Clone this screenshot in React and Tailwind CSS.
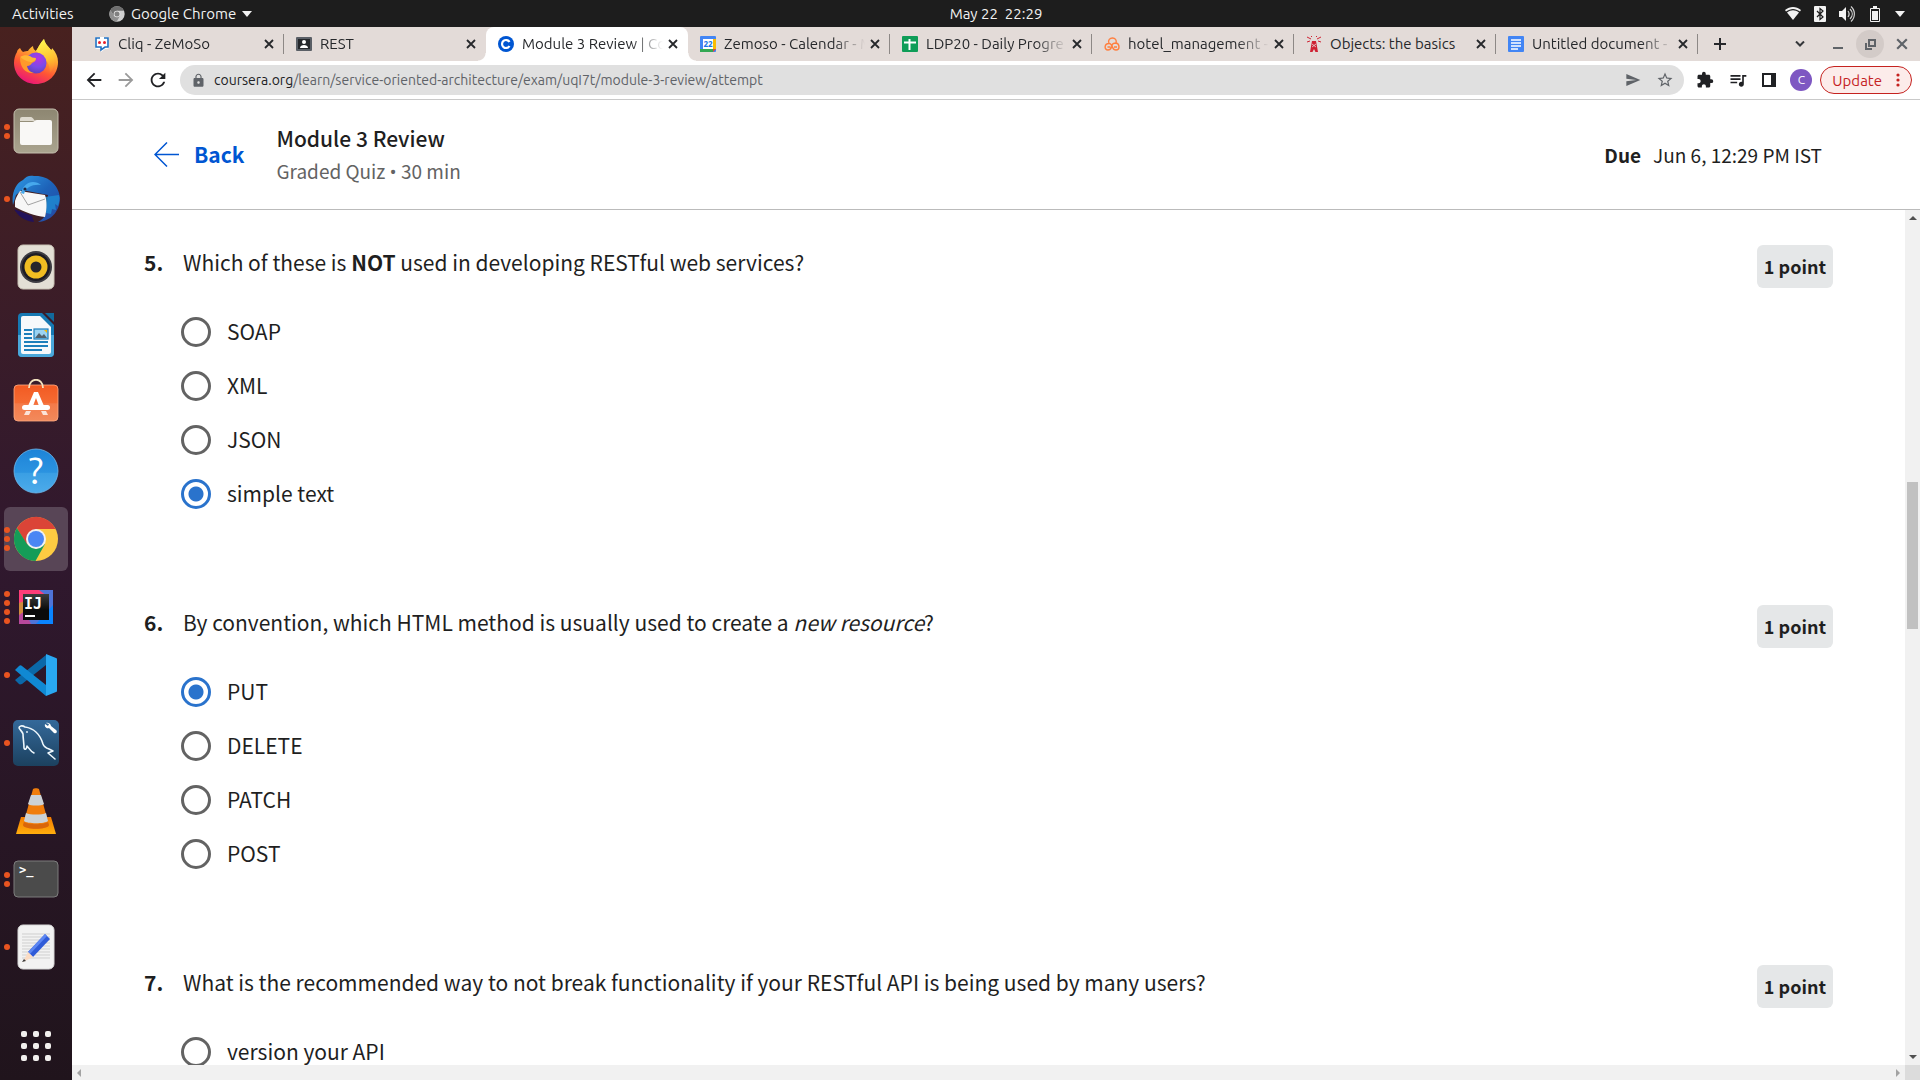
import React from "react";
import {
  MdArrowBack,
  MdArrowForward,
  MdRefresh,
  MdLock,
  MdSend,
  MdStarBorder,
  MdExtension,
  MdQueueMusic,
} from "react-icons/md";

/* ---------- Dock icons, each drawn on a 48 x 48 canvas ---------- */

function FirefoxIcon() {
  return (
    <svg viewBox="0 1 48 48" className="size-12">
      <defs>
        <linearGradient id="ffBody" x1="0.75" y1="0" x2="0.3" y2="1">
          <stop offset="0" stopColor="#fff44f" />
          <stop offset="0.35" stopColor="#ffa930" />
          <stop offset="0.65" stopColor="#ff5634" />
          <stop offset="1" stopColor="#e8127c" />
        </linearGradient>
        <radialGradient id="ffGlobe" cx="0.6" cy="0.3" r="0.8">
          <stop offset="0" stopColor="#b833e1" />
          <stop offset="0.5" stopColor="#7a4be8" />
          <stop offset="1" stopColor="#5b3fb0" />
        </radialGradient>
        <linearGradient id="ffFlame" x1="0.6" y1="0" x2="0.8" y2="1">
          <stop offset="0" stopColor="#fff44f" />
          <stop offset="0.6" stopColor="#ffc02f" />
          <stop offset="1" stopColor="#ff8a2a" stopOpacity="0.3" />
        </linearGradient>
      </defs>
      <path d="M8 10c1 2 2 3 3 4 2-1 4-1 5-1 1-2 3-4 5-5 0 2 1 4 3 5 2-3 4-8 8-12 1 5 4 7 7 11 1-1 1-1 1-2 4 4 6 9 6 14 0 13-10 22-22 22S2 37 2 25c0-4 1-8 3-11 0-1 1-3 3-4z" fill="url(#ffBody)" />
      <path d="M24 13c2-3 4-8 8-12 1 5 4 7 7 11 5 7 5 17-1 23 0-8-3-15-14-22z" fill="url(#ffFlame)" />
      <circle cx="24" cy="25" r="10.5" fill="url(#ffGlobe)" />
      <path d="M8 20c3-2 7-2 10-1 1 1 3 2 6 2 0 2-2 3-4 4-1 1-2 3-5 3 1 4 3 6 7 7-8 1-14-5-14-15z" fill="#ff9a2b" />
      <path d="M8 19c3-2 7-2 10-1 1 1 3 2 6 2 0 2-2 3-4 4-3 0-7-1-12-5z" fill="#ffb636" />
    </svg>
  );
}

function FilesIcon() {
  return (
    <svg viewBox="0 0 48 48" className="size-12">
      <defs>
        <linearGradient id="filesBg" x1="0" y1="0" x2="0" y2="1">
          <stop offset="0" stopColor="#8d8671" />
          <stop offset="1" stopColor="#aaa48f" />
        </linearGradient>
      </defs>
      <rect x="2" y="2" width="44" height="44" rx="5" fill="url(#filesBg)" stroke="#c4bfae" strokeWidth="1" />
      <path d="M8 14v-2a2 2 0 0 1 2-2h9c2 0 3 4 5 4z" fill="#dfdbd0" />
      <path d="M8 15h12c2 0 3-2 5-2h13a2 2 0 0 1 2 2v21a2 2 0 0 1-2 2H10a2 2 0 0 1-2-2z" fill="#f9f8f6" />
    </svg>
  );
}

function ThunderbirdIcon() {
  return (
    <svg viewBox="0 0 48 48" className="size-12">
      <defs>
        <linearGradient id="tbBody" x1="0" y1="0" x2="1" y2="1">
          <stop offset="0" stopColor="#2f9be6" />
          <stop offset="0.5" stopColor="#1d62b8" />
          <stop offset="1" stopColor="#2746a0" />
        </linearGradient>
      </defs>
      <path d="M2 34c4 7 10 12 20 13l-2-6z" fill="#22115a" />
      <path d="M1 30C-1 18 4 8 11 5c3-4 7-5 11-4 14-1 25 9 26 22 0 12-8 23-22 24 4-2 7-5 8-9l2-18-26-5-6 5z" fill="url(#tbBody)" />
      <path d="M33 22l14-2c1 4 0 8-1 11l-3-2 1 6-4-1-1 5-5-1z" fill="#1f8fd6" opacity="0.75" />
      <path d="M3 26c1-4 3-7 5-10l12 2 13 2c2 6 2 14 0 22-10-1-21-5-30-10z" fill="#f7f7f7" />
      <path d="M8 17l8 13 17-6" fill="none" stroke="#8d8d8d" strokeWidth="0.8" />
      <path d="M9 18c2-7 6-11 12-11 3 0 6 1 8 3-8-1-15 2-17 9z" fill="#47a9ec" />
      <circle cx="13" cy="14" r="1.6" fill="#1b2344" />
    </svg>
  );
}

function RhythmboxIcon() {
  return (
    <svg viewBox="0 0 48 48" className="size-12">
      <rect x="6" y="2" width="36" height="44" rx="5" fill="#e3dfd5" stroke="#c9c3b5" />
      <circle cx="24" cy="24" r="16" fill="#3d3c42" />
      <circle cx="24" cy="24" r="14" fill="#1d1c24" />
      <circle cx="24" cy="24" r="11.5" fill="#f0bd22" />
      <circle cx="24" cy="24" r="5.5" fill="#26252b" />
    </svg>
  );
}

function WriterIcon() {
  return (
    <svg viewBox="0 0 48 48" className="size-12">
      <path d="M10 2h20l12 12v28a4 4 0 0 1-4 4H10a4 4 0 0 1-4-4V6a4 4 0 0 1 4-4z" fill="#1679b3" />
      <path d="M6 24h36v18a4 4 0 0 1-4 4H10a4 4 0 0 1-4-4z" fill="#4aa8da" />
      <path d="M11 5h17l11 11v25a2 2 0 0 1-2 2H11a2 2 0 0 1-2-2V7a2 2 0 0 1 2-2z" fill="#f6f9fb" />
      <path d="M33 2h9v9z" fill="#12699c" />
      <path d="M12 19h8M12 23h8M12 27h8M12 31h24M12 35h24M12 39h18" stroke="#1c7fbb" strokeWidth="1.8" />
      <rect x="22" y="18" width="14" height="10" fill="#9bd3f2" stroke="#1c7fbb" strokeWidth="1.2" />
      <path d="M23 27l4-5 3 3 2-2 3 4z" fill="#51626d" />
      <path d="M32 19h3v3z" fill="#f2b705" />
    </svg>
  );
}

function SoftwareIcon() {
  return (
    <svg viewBox="0 3 48 48" className="size-12">
      <defs>
        <linearGradient id="swBg" x1="0" y1="0" x2="0" y2="1">
          <stop offset="0" stopColor="#f25a22" />
          <stop offset="0.5" stopColor="#f56b33" />
          <stop offset="0.52" stopColor="#f47a49" />
          <stop offset="1" stopColor="#f28a5c" />
        </linearGradient>
      </defs>
      <rect x="2" y="9" width="44" height="36" rx="4" fill="url(#swBg)" stroke="#ffab84" strokeWidth="0.8" />
      <path d="M17 12c0-11 14-11 14 0" fill="none" stroke="#f3e3bf" strokeWidth="1.8" />
      <path d="M22 16h4l6 14h-5l-3-8-3 8h-5z" fill="#ffffff" />
      <rect x="10" y="29" width="28" height="5" rx="2.5" fill="#ffffff" />
      <path d="M14 35h5l-2 4h-5zM29 35h5l2 4h-5z" fill="#fbe3d8" />
    </svg>
  );
}

function HelpIcon() {
  return (
    <svg viewBox="0 0 48 48" className="size-12">
      <defs>
        <linearGradient id="helpBg" x1="0" y1="0" x2="0" y2="1">
          <stop offset="0" stopColor="#1d83d8" />
          <stop offset="0.53" stopColor="#2b93e0" />
          <stop offset="0.55" stopColor="#3a9fe4" />
          <stop offset="1" stopColor="#4dabea" />
        </linearGradient>
      </defs>
      <circle cx="24" cy="24" r="22" fill="url(#helpBg)" stroke="#6db9ee" strokeWidth="0.8" />
      <text x="24" y="37" textAnchor="middle" fill="#fff" className="font-[Ubuntu,'Open_Sans',sans-serif] text-[38px]">?</text>
    </svg>
  );
}

function ChromeIcon() {
  return (
    <svg viewBox="0 0 48 48" className="size-12">
      <circle cx="24" cy="24" r="22" fill="#fdcb42" />
      <path d="M24 14h19.700A22 22 0 0 0 4.900 13L15 30z" fill="#db4437" />
      <path d="M4.900 13A22 22 0 0 0 23.500 46L33 29 24 34 15 29z" fill="#159c58" />
      <circle cx="24" cy="24" r="10" fill="#f1f1f1" />
      <circle cx="24" cy="24" r="8" fill="#4a86f4" />
    </svg>
  );
}

function ChromeGrayIcon() {
  return (
    <svg viewBox="0 0 48 48" className="size-4">
      <circle cx="24" cy="24" r="23" fill="#cfcfcf" />
      <path d="M24 14h21A23 23 0 0 0 4 13l11 17z" fill="#6f6f6f" />
      <path d="M4 13a23 23 0 0 0 19 34l10-18-9 5-9-5z" fill="#8f8f8f" />
      <circle cx="24" cy="24" r="10" fill="#e6e6e6" />
      <circle cx="24" cy="24" r="7.500" fill="#808080" />
    </svg>
  );
}

function IdeaIcon() {
  return (
    <svg viewBox="0 0 48 48" className="size-12">
      <defs>
        <linearGradient id="ijDark" x1="0" y1="0" x2="0" y2="1">
          <stop offset="0" stopColor="#3c3c3c" />
          <stop offset="0.6" stopColor="#0b0b0b" />
        </linearGradient>
      </defs>
      <rect x="7" y="7" width="34" height="34" fill="#4f74d8" />
      <path d="M7 7h20l8 6L7 30z" fill="#fe3d78" />
      <path d="M7 20l6-2v14l-6 4z" fill="#d18b3c" />
      <path d="M7 32l6-4 6 13H7z" fill="#b7489b" />
      <path d="M41 22v19H24z" fill="#0a84ff" />
      <rect x="11" y="11" width="26" height="26" fill="url(#ijDark)" />
      <text x="12" y="26" fill="#fff" className="font-['DejaVu_Sans_Mono',monospace] text-[15px] font-bold">IJ</text>
      <rect x="13" y="32" width="10" height="2" fill="#fff" />
    </svg>
  );
}

function CodeIcon() {
  return (
    <svg viewBox="0 0 48 48" className="size-12">
      <path d="M3 29l4 4c1 1 2 0 3 0l24-19V4L3 29z" fill="#0b68a8" />
      <path d="M3 19l4-4c1-1 2-1 3 0l24 19v11L3 19z" fill="#1089d3" />
      <path d="M34 3l10 4c1 0 1 1 1 2v30c0 1 0 2-1 2l-10 4z" fill="#29a8f1" />
    </svg>
  );
}

function MysqlIcon() {
  return (
    <svg viewBox="0 0 48 48" className="size-12">
      <defs>
        <linearGradient id="sqlBg" x1="0" y1="0" x2="0" y2="1">
          <stop offset="0" stopColor="#34699a" />
          <stop offset="1" stopColor="#1c415f" />
        </linearGradient>
      </defs>
      <rect x="1" y="1" width="46" height="46" rx="5" fill="url(#sqlBg)" />
      <path d="M7 9c0-2 3-3 6-1 8 1 15 7 18 17 1 3 3 4 6 5l4 2-5 2 7 6M7 9c1 2 3 3 4 6 0 4 1 9 1 14 1 3 3 0 3-2 2 2 3 5 7 7" fill="none" stroke="#eef7fc" strokeWidth="1.600" strokeLinejoin="round" strokeLinecap="round" />
      <circle cx="15" cy="13" r="0.900" fill="#eef7fc" />
      <path d="M34 4c2-1 5 1 5 3l5 4c2 2 0 4-2 3l-5-5c-2 1-5-1-4-4l3 2 1-2z" fill="#fff" />
    </svg>
  );
}

function VlcIcon() {
  return (
    <svg viewBox="0 0 48 48" className="size-12">
      <defs>
        <linearGradient id="vlcBase" x1="0" y1="0" x2="0" y2="1">
          <stop offset="0" stopColor="#f57c00" />
          <stop offset="1" stopColor="#ffae0d" />
        </linearGradient>
      </defs>
      <path d="M9 30h30l5 17H4z" fill="url(#vlcBase)" />
      <path d="M21 2c1-1 5-1 6 0l10 36c-1 5-25 5-26 0z" fill="#f07d0c" />
      <path d="M19 8h10l3 9c-2 2-14 2-16 0z" fill="#ccd2d6" />
      <path d="M14 26c4 2 16 2 20 0l2 8c-3 3-21 3-24 0z" fill="#ccd2d6" />
      <path d="M12 35c4 3 20 3 24 0l1 3c-1 5-25 5-26 0z" fill="#d9660a" />
    </svg>
  );
}

function TerminalIcon() {
  return (
    <svg viewBox="0 0 48 48" className="size-12">
      <rect x="2" y="6" width="44" height="36" rx="4" fill="#4b4b4b" stroke="#7d7d7d" />
      <text x="7" y="19" fill="#fff" className="font-['DejaVu_Sans_Mono',monospace] text-[12px] font-bold">&gt;_</text>
    </svg>
  );
}

function EditorIcon() {
  return (
    <svg viewBox="0 0 48 48" className="size-12">
      <rect x="6" y="2" width="36" height="44" rx="5" fill="#f2f2f2" stroke="#d8d8d8" />
      <path d="M10 11h28M10 14h28M10 17h28M10 20h28M10 23h28M10 26h28M10 29h28M10 32h28M10 35h28" stroke="#cfcfcf" strokeWidth="1" />
      <path d="M33 11l5 5-17 18-5-5z" fill="#2f5bd8" />
      <path d="M33 11l2 2-17 18-2-2z" fill="#5c86f2" />
      <path d="M16 29l5 5-10 5z" fill="#fbdcc4" />
      <path d="M12 36l2 2-4 1z" fill="#3a3a3a" />
    </svg>
  );
}

function AppGridIcon() {
  return (
    <span className="grid grid-cols-3 gap-1.5">
      {Array.from({ length: 9 }, (_, i) => (
        <span key={i} className="size-1.5 rounded-xs bg-[#f2f0ee]" />
      ))}
    </span>
  );
}

const dockItems = [
  { name: "Firefox", icon: FirefoxIcon, windows: 0 },
  { name: "Files", icon: FilesIcon, windows: 2 },
  { name: "Thunderbird", icon: ThunderbirdIcon, windows: 1 },
  { name: "Rhythmbox", icon: RhythmboxIcon, windows: 0 },
  { name: "LibreOffice Writer", icon: WriterIcon, windows: 0 },
  { name: "Ubuntu Software", icon: SoftwareIcon, windows: 0 },
  { name: "Help", icon: HelpIcon, windows: 0 },
  { name: "Google Chrome", icon: ChromeIcon, windows: 3, active: true },
  { name: "IntelliJ IDEA", icon: IdeaIcon, windows: 4 },
  { name: "Visual Studio Code", icon: CodeIcon, windows: 1 },
  { name: "MySQL Workbench", icon: MysqlIcon, windows: 1 },
  { name: "VLC", icon: VlcIcon, windows: 0 },
  { name: "Terminal", icon: TerminalIcon, windows: 2 },
  { name: "Text Editor", icon: EditorIcon, windows: 1 },
];

function Dock() {
  return (
    <nav aria-label="Dock" className="flex w-[72px] shrink-0 flex-col items-center bg-linear-to-b from-[#48211f] via-[#30182e] to-[#20141c] pt-0.5">
      {dockItems.map(({ name, icon: Icon, windows, active }) => (
        <div key={name} className="relative flex h-[68px] w-full items-center justify-center">
          <button
            type="button"
            aria-label={name}
            className={
              active
                ? "flex size-16 items-center justify-center rounded-md bg-[#584556]"
                : "flex size-16 items-center justify-center rounded-md"
            }
          >
            <Icon />
          </button>
          <span className="absolute inset-y-0 left-1 flex flex-col justify-center gap-[3px]">
            {Array.from({ length: windows }, (_, i) => (
              <span key={i} className="size-1.5 rounded-full bg-[#e95420]" />
            ))}
          </span>
        </div>
      ))}
      <button type="button" aria-label="Show Applications" className="mt-auto flex h-[68px] w-full items-center justify-center">
        <AppGridIcon />
      </button>
    </nav>
  );
}

/* ---------- System bar ---------- */

function SystemBar() {
  return (
    <header className="flex h-[27px] shrink-0 bg-[#1d1d1d] text-[15px] leading-[27px] text-[#f2f2f2]">
      <button type="button" className="w-[72px] shrink-0 pl-3 text-left whitespace-nowrap">Activities</button>
      <div className="grid flex-1 grid-cols-[1fr_auto_1fr]">
        <button type="button" className="flex items-center gap-1.5 justify-self-start pl-[37px]">
          <ChromeGrayIcon />
          Google Chrome
          <svg viewBox="0 0 10 6" className="h-[6px] w-[10px]"><path d="M0 0h10L5 6z" fill="#f2f2f2" /></svg>
        </button>
        <time className="whitespace-pre">{"May 22  22:29"}</time>
        <div className="flex items-center gap-[13px] justify-self-end pr-[15px]">
          <svg viewBox="0 0 16 16" className="size-4" role="img" aria-label="Wi-Fi">
            <path d="M0 4c5-4 11-4 16 0l-1 1.500C10 2 6 2 1 5.500z" fill="#f2f2f2" />
            <path d="M2 6.500c4-3 8-3 12 0L8 14z" fill="#f2f2f2" />
          </svg>
          <svg viewBox="0 0 12 16" className="h-4 w-3" role="img" aria-label="Bluetooth">
            <rect width="12" height="16" rx="1" fill="#f2f2f2" />
            <path d="M3 5l6 6-3 2.500v-11L9 5l-6 6" fill="none" stroke="#1d1d1d" strokeWidth="1.200" />
          </svg>
          <svg viewBox="0 0 16 16" className="size-4" role="img" aria-label="Volume">
            <path d="M0 5h3l4-4v14l-4-4H0z" fill="#f2f2f2" />
            <path d="M9 5c1.500 2 1.500 4 0 6M11 3c3 3 3 7 0 10M12 0.500c4.500 4 4.500 11 0 15" fill="none" stroke="#d0d0d0" strokeWidth="1.200" />
          </svg>
          <svg viewBox="0 0 10 16" className="mx-0.5 h-4 w-2.5" role="img" aria-label="Battery">
            <path d="M3 0h4v2h2a1 1 0 0 1 1 1v12a1 1 0 0 1-1 1H1a1 1 0 0 1-1-1V3a1 1 0 0 1 1-1h2z" fill="#f2f2f2" />
            <rect x="1" y="3" width="8" height="12" fill="#1d1d1d" />
            <rect x="2" y="5" width="6" height="9" fill="#f2f2f2" />
          </svg>
          <svg viewBox="0 0 10 6" className="h-[6px] w-[10px]"><path d="M0 0h10L5 6z" fill="#f2f2f2" /></svg>
        </div>
      </div>
    </header>
  );
}

/* ---------- Browser tabs ---------- */

const favicons = {
  cliq: (
    <>
      <path d="M2 1h12a1 1 0 0 1 1 1v9a2 2 0 0 1-2 2h-2l-4 3v-3H3a2 2 0 0 1-2-2V2a1 1 0 0 1 1-1z" fill="#fff" />
      <path d="M6 2H2v9h5v3l4-3h3V2h-4" fill="none" stroke="#1f6fc0" strokeWidth="1.600" />
      <rect x="4" y="5" width="3" height="3" rx="1.500" fill="#e8202a" />
      <rect x="9" y="5" width="3" height="3" rx="1.500" fill="#e8202a" />
    </>
  ),
  classroom: (
    <>
      <rect y="1" width="16" height="14" rx="1" fill="#5a5f66" />
      <rect x="2" y="3" width="12" height="10" fill="#24272b" />
      <circle cx="8" cy="6" r="2" fill="#fff" />
      <path d="M4 12c0-4 8-4 8 0z" fill="#fff" />
    </>
  ),
  coursera: (
    <>
      <circle cx="8" cy="8" r="8" fill="#0056d2" />
      <path d="M11.500 6A4 4 0 1 0 11.500 10" fill="none" stroke="#fff" strokeWidth="2.200" />
    </>
  ),
  calendar: (
    <>
      <rect width="16" height="16" rx="1" fill="#4285f4" />
      <rect x="13" y="3" width="3" height="10" fill="#fbbc04" />
      <rect x="0" y="13" width="13" height="3" fill="#34a853" />
      <path d="M13 13h3l-3 3z" fill="#ea4335" />
      <rect x="3" y="3" width="10" height="10" fill="#fff" />
      <text x="8" y="11" textAnchor="middle" fill="#1a73e8" className="font-['Noto_Sans',sans-serif] text-[8px] font-bold">22</text>
    </>
  ),
  sheets: (
    <>
      <rect width="16" height="16" rx="1" fill="#0f9d58" />
      <path d="M2 6.500h12M7.500 3v11" stroke="#fff" strokeWidth="2" />
    </>
  ),
  hotel: (
    <path d="M5 7.500C3.500 4 6 2 8.500 2S13 4 12 7c4 1 4 7 0 7-3 0-3-2-4-4M5 7.500c-5 0-5 6.500-1 6.500 3 0 3-2 4-4M5 7.500c2 0 2 1 3 2.500 0-2 1-3 4-3M3.500 11h3M10 11h3" fill="none" stroke="#ff7f3f" strokeWidth="1.400" />
  ),
  tower: (
    <>
      <path d="M6 5h4l2 11h-2.500L8 13l-1.500 3H4z" fill="#cf2233" />
      <path d="M1 1l4 2M15 1l-4 2M1 6l3-1M15 6l-3-1M5 0l1 1M11 0l-1 1" fill="none" stroke="#cf2233" strokeWidth="1" />
      <path d="M6 11l4-3M6 8l4 3" stroke="#e3dbd8" strokeWidth="0.800" />
    </>
  ),
  docs: (
    <>
      <rect width="16" height="16" rx="1" fill="#4285f4" />
      <path d="M3 4h10M3 7h10M3 10h10M3 13h7" stroke="#fff" strokeWidth="1.500" />
    </>
  ),
};

const tabs = [
  { title: "Cliq - ZeMoSo", icon: "cliq", divider: true },
  { title: "REST", icon: "classroom" },
  { title: "Module 3 Review | Co", icon: "coursera", active: true },
  { title: "Zemoso - Calendar - M", icon: "calendar", divider: true },
  { title: "LDP20 - Daily Progre", icon: "sheets", divider: true },
  { title: "hotel_management -", icon: "hotel", divider: true },
  { title: "Objects: the basics", icon: "tower", divider: true, whole: true },
  { title: "Untitled document -", icon: "docs", divider: true },
];

function Cross({ className }) {
  return (
    <svg viewBox="0 0 10 10" className={className}>
      <path d="M1 1l8 8M9 1L1 9" stroke="currentColor" strokeWidth="1.800" />
    </svg>
  );
}

function Tab({ title, icon, active, divider, whole }) {
  return (
    <div
      className={
        active
          ? "relative flex h-full max-w-[202px] min-w-0 flex-1 items-center rounded-t-lg bg-white pr-[7px] pl-3"
          : "relative flex h-full max-w-[202px] min-w-0 flex-1 items-center pr-[7px] pl-3"
      }
    >
      {active && (
        <>
          <span className="absolute bottom-0 -left-2 size-2 bg-[radial-gradient(circle_at_0_0,transparent_7px,white_8px)]" />
          <span className="absolute -right-2 bottom-0 size-2 bg-[radial-gradient(circle_at_100%_0,transparent_7px,white_8px)]" />
        </>
      )}
      <button type="button" role="tab" aria-selected={!!active} className="flex min-w-0 flex-1 items-center gap-2 text-left">
        <svg viewBox="0 0 16 16" className="size-4 shrink-0">{favicons[icon]}</svg>
        <span
          className={
            whole
              ? "min-w-0 flex-1 overflow-hidden whitespace-nowrap"
              : "min-w-0 flex-1 overflow-hidden [mask-image:linear-gradient(to_right,black_calc(100%-32px),transparent)] whitespace-nowrap"
          }
        >
          {title}
        </span>
      </button>
      <button type="button" aria-label={"Close " + title} className="ml-0.5 flex size-4 items-center justify-center">
        <Cross className="size-2.5" />
      </button>
      {divider && <span className="absolute top-[7px] right-0 h-5 w-px bg-[#8d8886]" />}
    </div>
  );
}

function TabStrip() {
  return (
    <div className="flex h-[34px] shrink-0 items-center bg-[#e3dbd8] pl-[10px] text-[15px] text-[#26282b]">
      <div role="tablist" className="flex h-full min-w-0 flex-1">
        {tabs.map((tab) => (
          <Tab key={tab.title} {...tab} />
        ))}
        <button type="button" aria-label="New tab" className="flex w-11 items-center justify-center">
          <svg viewBox="0 0 12 12" className="size-3"><path d="M6 0v12M0 6h12" stroke="currentColor" strokeWidth="2" /></svg>
        </button>
      </div>
      <div className="flex items-center pr-1 text-[#5f6368]">
        <button type="button" aria-label="Search tabs" className="mr-1.5 flex size-7 items-center justify-center text-[#35373a]">
          <svg viewBox="0 0 10 6" className="h-1.5 w-2.5"><path d="M1 0.500l4 4 4-4" fill="none" stroke="currentColor" strokeWidth="2" /></svg>
        </button>
        <button type="button" aria-label="Minimize" className="flex h-7 w-9 items-center justify-center pt-2">
          <span className="h-0.5 w-2.5 bg-[#5f6368]" />
        </button>
        <button type="button" aria-label="Restore" className="flex size-7 items-center justify-center rounded-full bg-[#d3cbc8]">
          <svg viewBox="0 0 11 11" className="size-[11px]">
            <path d="M4 1h6v6H4zM1 4v6h6" fill="none" stroke="currentColor" strokeWidth="2" />
          </svg>
        </button>
        <button type="button" aria-label="Close window" className="ml-1 flex size-7 items-center justify-center">
          <Cross className="size-3" />
        </button>
      </div>
    </div>
  );
}

/* ---------- Browser toolbar ---------- */

function Toolbar() {
  return (
    <div className="flex h-[39px] shrink-0 items-center border-b border-[#c9c9c9] bg-white pr-2 pl-[11px] text-[#202124]">
      <div className="flex items-center gap-[10px]">
        <button type="button" aria-label="Back"><MdArrowBack className="size-[22px]" /></button>
        <button type="button" aria-label="Forward" className="text-[#9a9a9a]"><MdArrowForward className="size-[22px]" /></button>
        <button type="button" aria-label="Reload"><MdRefresh className="size-[22px]" /></button>
      </div>
      <div className="ml-[11px] flex h-[30px] min-w-0 flex-1 items-center rounded-full bg-[#e0e0e0] pr-[10px] pl-[11px] text-sm text-[#5f6368]">
        <MdLock className="size-[15px] shrink-0" />
        <a href="#address" className="ml-2 flex-1 truncate">
          <span className="text-[#202124]">coursera.org</span>/learn/service-oriented-architecture/exam/uqI7t/module-3-review/attempt
        </a>
        <button type="button" aria-label="Share" className="mr-[15px]"><MdSend className="size-4" /></button>
        <button type="button" aria-label="Bookmark"><MdStarBorder className="size-[18px]" /></button>
      </div>
      <div className="ml-3 flex items-center">
        <button type="button" aria-label="Extensions" className="mr-[14px]"><MdExtension className="size-[18px]" /></button>
        <button type="button" aria-label="Media" className="mr-[14px]"><MdQueueMusic className="size-5" /></button>
        <button type="button" aria-label="Side panel" className="mr-[14px]">
          <svg viewBox="0 0 14 14" className="size-[14px]">
            <path d="M1 1h12v12H1z" fill="none" stroke="currentColor" strokeWidth="2" />
            <path d="M9 1h4v12H9z" fill="currentColor" />
          </svg>
        </button>
        <button type="button" aria-label="Profile" className="mr-2 flex size-[22px] items-center justify-center rounded-full bg-[#7e57c2] text-xs text-white">C</button>
        <button type="button" className="flex h-7 items-center gap-[14px] rounded-full border border-[#c5221f] bg-[#fcecea] pr-[11px] pl-[11px] text-[15px] leading-none text-[#c5221f]">
          Update
          <svg viewBox="0 0 4 14" className="h-[14px] w-1">
            <circle cx="2" cy="2" r="1.600" fill="currentColor" />
            <circle cx="2" cy="7" r="1.600" fill="currentColor" />
            <circle cx="2" cy="12" r="1.600" fill="currentColor" />
          </svg>
        </button>
      </div>
    </div>
  );
}

/* ---------- Quiz page ---------- */

const questions = [
  {
    number: 5,
    prompt: (
      <>Which of these is <strong>NOT</strong> used in developing RESTful web services?</>
    ),
    options: ["SOAP", "XML", "JSON", "simple text"],
    selected: "simple text",
  },
  {
    number: 6,
    prompt: (
      <>By convention, which HTML method is usually used to create a <em>new resource</em>?</>
    ),
    options: ["PUT", "DELETE", "PATCH", "POST"],
    selected: "PUT",
  },
  {
    number: 7,
    prompt: "What is the recommended way to not break functionality if your RESTful API is being used by many users?",
    options: ["version your API"],
  },
];

function Question({ number, prompt, options, selected }) {
  return (
    <fieldset className="mb-[84px] flex items-start leading-[34px]">
      <span className="w-[37px] shrink-0 font-bold">{number}.</span>
      <div className="min-w-0 flex-1">
        <p className="ml-0.5">{prompt}</p>
        <div className="mt-[26px]">
          {options.map((option) => (
            <label key={option} className="flex h-[54px] w-fit items-center gap-4">
              <input
                type="radio"
                name={"question-" + number}
                defaultChecked={option === selected}
                className="size-[30px] appearance-none rounded-full border-3 border-[#636363] checked:border-[#2a73cc] checked:bg-[radial-gradient(circle,#2a73cc_7px,transparent_8px)]"
              />
              <span className="pb-0.5">{option}</span>
            </label>
          ))}
        </div>
      </div>
      <span className="flex h-[43px] items-center rounded-md bg-[#e5e7e8] px-[7px] pb-0.5 text-lg font-bold">1 point</span>
    </fieldset>
  );
}

function ScrollArrow({ className }) {
  return (
    <svg viewBox="0 0 8 4" className={className}><path d="M0 4l4-4 4 4z" fill="currentColor" /></svg>
  );
}

function QuizPage() {
  return (
    <main className="flex min-h-0 flex-1 flex-col bg-white font-['Noto_Sans_CJK_SC',sans-serif] text-[21px] text-[#1f1f1f]">
      <div className="flex h-[110px] shrink-0 items-center border-b border-[#bbbbbb] pr-[98px] pl-[82px] leading-8">
        <a href="#back" className="flex items-center gap-[15px] font-bold text-[#0056d2]">
          <svg viewBox="0 0 25 25" className="size-[25px]">
            <path d="M25 12.500H1M13 0.500l-12 12 12 12" fill="none" stroke="currentColor" strokeWidth="1.500" />
          </svg>
          <span className="pb-0.5">Back</span>
        </a>
        <div className="ml-8">
          <h1 className="pb-px font-medium">Module 3 Review</h1>
          <p className="text-[19px] leading-8 text-[#636363]">
            Graded Quiz <span className="font-['Open_Sans',sans-serif]">•</span> 30 min
          </p>
        </div>
        <p className="ml-auto flex gap-3 text-[19px]">
          <strong>Due</strong>
          <span>Jun 6, 12:29 PM IST</span>
        </p>
      </div>
      <div className="flex min-h-0 flex-1">
        <div className="min-w-0 flex-1 overflow-hidden px-[72px] pt-[35px]">
          {questions.map((question) => (
            <Question key={question.number} {...question} />
          ))}
        </div>
        <div className="flex w-[15px] shrink-0 flex-col items-center bg-[#f1f1f1] py-1.5 text-[#505050]">
          <ScrollArrow className="h-1 w-2" />
          <div className="flex min-h-0 flex-1 flex-col">
            <div className="flex-[262]" />
            <div className="w-[11px] flex-[147] bg-[#c1c1c1]" />
            <div className="flex-[426]" />
          </div>
          <ScrollArrow className="h-1 w-2 rotate-180" />
        </div>
      </div>
      <div className="flex h-[15px] shrink-0 items-center bg-[#f1f1f1] text-[#a3a3a3]">
        <ScrollArrow className="ml-[3px] h-1 w-2 -rotate-90" />
        <ScrollArrow className="mr-[3px] ml-auto h-1 w-2 rotate-90" />
        <span className="h-full w-[15px] bg-[#dcdcdc]" />
      </div>
    </main>
  );
}

export default function App() {
  return (
    <div className="flex h-screen flex-col overflow-hidden font-[Ubuntu,'Open_Sans',sans-serif]">
      <SystemBar />
      <div className="flex min-h-0 flex-1">
        <Dock />
        <div className="flex min-w-0 flex-1 flex-col">
          <TabStrip />
          <Toolbar />
          <QuizPage />
        </div>
      </div>
    </div>
  );
}
